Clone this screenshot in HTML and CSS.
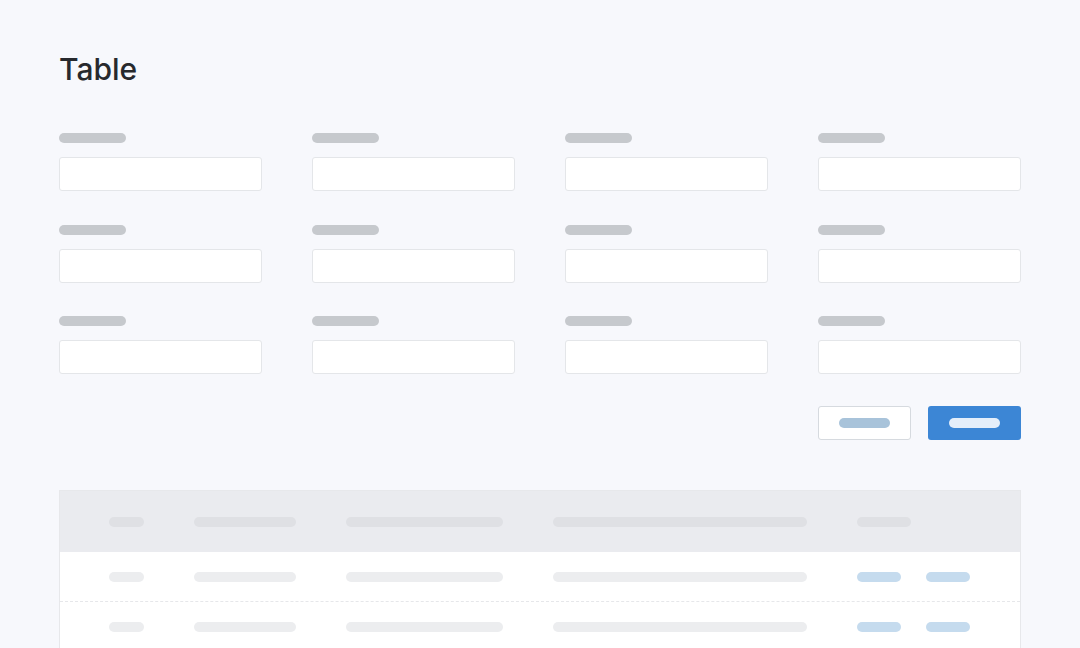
FILE: index.html
```html
<!DOCTYPE html>
<html>
<head>
<meta charset="utf-8">
<link rel="stylesheet" href="styles.css">
</head>
<body>
<div class="page">
  <h1 class="title">Table</h1>
  <div class="form">
    <div class="field"><div class="label"></div><div class="input"></div></div>
    <div class="field"><div class="label"></div><div class="input"></div></div>
    <div class="field"><div class="label"></div><div class="input"></div></div>
    <div class="field"><div class="label"></div><div class="input"></div></div>
    <div class="field"><div class="label"></div><div class="input"></div></div>
    <div class="field"><div class="label"></div><div class="input"></div></div>
    <div class="field"><div class="label"></div><div class="input"></div></div>
    <div class="field"><div class="label"></div><div class="input"></div></div>
    <div class="field"><div class="label"></div><div class="input"></div></div>
    <div class="field"><div class="label"></div><div class="input"></div></div>
    <div class="field"><div class="label"></div><div class="input"></div></div>
    <div class="field"><div class="label"></div><div class="input"></div></div>
  </div>
  <div class="actions">
    <div class="btn btn-outline"><span class="btn-bar"></span></div>
    <div class="btn btn-primary"><span class="btn-bar"></span></div>
  </div>
  <div class="table">
    <div class="row head">
      <span class="cell c1"></span><span class="cell c2"></span><span class="cell c3"></span><span class="cell c4"></span><span class="cell c5"></span>
    </div>
    <div class="row">
      <span class="cell c1"></span><span class="cell c2"></span><span class="cell c3"></span><span class="cell c4"></span>
      <span class="ops"><span class="link"></span><span class="link"></span></span>
    </div>
    <div class="row">
      <span class="cell c1"></span><span class="cell c2"></span><span class="cell c3"></span><span class="cell c4"></span>
      <span class="ops"><span class="link"></span><span class="link"></span></span>
    </div>
  </div>
</div>
</body>
</html>
```

FILE: styles.css
```css
html, body {
  margin: 0;
  padding: 0;
  background: #f7f8fc;
  height: 100%;
  overflow: hidden;
}
.page {
  padding: 0 59px;
  font-family: Inter, "Liberation Sans", Arial, sans-serif;
}
.title {
  margin: 0;
  padding-top: 51px;
  font-size: 30px;
  line-height: 36px;
  font-weight: 500;
  color: #27292d;
  height: 36px;
}
.form {
  margin-top: 46px;
  display: grid;
  grid-template-columns: repeat(4, 203px);
  column-gap: 50px;
  row-gap: 33.5px;
}
.field {
  display: flex;
  flex-direction: column;
}
.label {
  width: 67px;
  height: 10px;
  border-radius: 5px;
  background: #c6c9cd;
  margin-bottom: 14px;
}
.input {
  height: 34px;
  box-sizing: border-box;
  background: #ffffff;
  border: 1px solid #e4e6e9;
  border-radius: 3px;
}
.actions {
  margin-top: 32px;
  display: flex;
  justify-content: flex-end;
  gap: 17px;
}
.btn {
  width: 93px;
  height: 34px;
  box-sizing: border-box;
  border-radius: 3px;
  display: flex;
  align-items: center;
  justify-content: center;
}
.btn-outline {
  background: #ffffff;
  border: 1px solid #d6dadf;
}
.btn-outline .btn-bar {
  background: #a8c3da;
}
.btn-primary {
  background: #3c86d5;
}
.btn-primary .btn-bar {
  background: #e4eefa;
}
.btn-bar {
  width: 51px;
  height: 10px;
  border-radius: 5px;
}
.table {
  margin-top: 50px;
  background: #ffffff;
  border: 1px solid #e7e8eb;
  border-bottom: none;
  height: 200px;
}
.row {
  display: flex;
  align-items: center;
  gap: 50px;
  padding-left: 49px;
  height: 49px;
  border-bottom: 1px dashed #e6e7ea;
}
.row.head {
  height: 61px;
  background: #eaebef;
  border-bottom: none;
}
.cell {
  height: 10px;
  border-radius: 5px;
  background: #ecedef;
}
.head .cell {
  background: #dfe0e4;
}
.c1 { width: 35px; }
.c2 { width: 102px; }
.c3 { width: 157px; }
.c4 { width: 254px; }
.c5 { width: 54px; }
.ops {
  display: flex;
  gap: 25px;
}
.link {
  width: 44px;
  height: 10px;
  border-radius: 5px;
  background: #c5dbee;
}
```
